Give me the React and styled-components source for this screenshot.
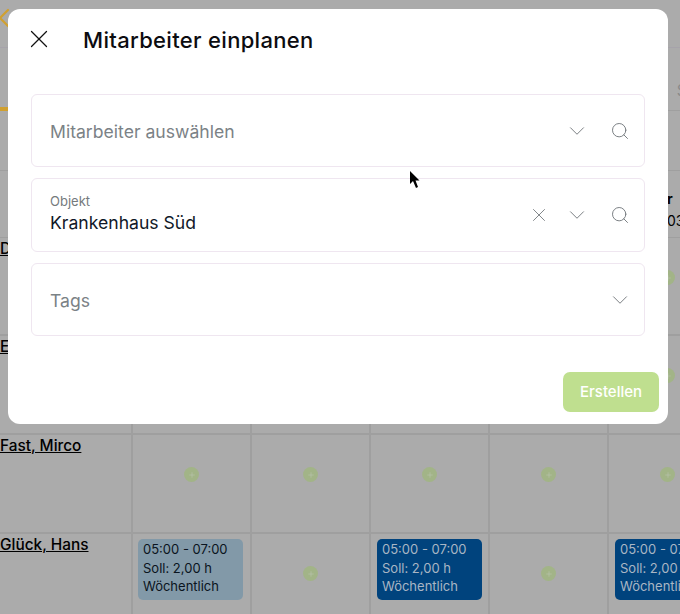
import styled, { createGlobalStyle } from 'styled-components';
import { X, ChevronDown, ChevronLeft, Search, Plus } from 'lucide-react';

const GlobalStyle = createGlobalStyle`
    * { box-sizing: border-box; }
    html, body { margin: 0; height: 100%; }
    body {
        background: #ababab;
        font-family: Inter, "Liberation Sans", sans-serif;
        overflow: hidden;
    }
`

const shifts = { 1: 'light', 3: 'dark', 5: 'dark' };
const rows = [
    { name: 'Dietrich, Ute', height: 98 },
    { name: 'Ernst, Paul', height: 99 },
    { name: 'Fast, Mirco', height: 99 },
    { name: 'Glück, Hans', height: 99, shifts },
];

const Field = ({ label, value, placeholder, clear }) => (
    <FieldBox $tall={Boolean(label)}>
        <FieldText>
            {label && <FieldLabel>{label}</FieldLabel>}
            {value ? <FieldValue>{value}</FieldValue> : <Placeholder>{placeholder}</Placeholder>}
        </FieldText>
        <FieldIcons>
            {clear && <ClearSlot><X size={22} strokeWidth={0.95} /></ClearSlot>}
            <IconSlot><ChevronDown size={26} strokeWidth={0.85} /></IconSlot>
            <IconSlot><Search size={20} strokeWidth={1.1} /></IconSlot>
        </FieldIcons>
    </FieldBox>
);

export default function App() {
    return (
        <Page>
            <GlobalStyle />
            <Schedule>
                <TopBar><BackIcon size={32} strokeWidth={1.7} /></TopBar>
                <Tabs><TabMark /><TabText>S</TabText></Tabs>
                <Filler />
                <HeadRow>
                    <WeekDay>Fr</WeekDay>
                    <WeekDate>03</WeekDate>
                </HeadRow>
                {rows.map((row) => (
                    <Row key={row.name} $height={row.height}>
                        <NameCell><NameLink>{row.name}</NameLink></NameCell>
                        {[1, 2, 3, 4, 5].map((day) => (
                            <DayCell key={day} $hasShift={row.shifts && row.shifts[day]}>
                                {row.shifts && row.shifts[day] ? (
                                    <Shift $tone={row.shifts[day]}>
                                        <span>05:00 - 07:00</span>
                                        <span>Soll: 2,00 h</span>
                                        <span>Wöchentlich</span>
                                    </Shift>
                                ) : (
                                    <AddDot><Plus size={8} strokeWidth={2} /></AddDot>
                                )}
                            </DayCell>
                        ))}
                    </Row>
                ))}
            </Schedule>

            <Modal>
                <ModalHead>
                    <CloseButton><X size={30} strokeWidth={1} /></CloseButton>
                    <Title>Mitarbeiter einplanen</Title>
                </ModalHead>
                <Fields>
                    <Field placeholder="Mitarbeiter auswählen" />
                    <Field label="Objekt" value="Krankenhaus Süd" clear />
                    <TagsField>
                        <Placeholder>Tags</Placeholder>
                        <IconSlot><ChevronDown size={26} strokeWidth={0.85} /></IconSlot>
                    </TagsField>
                </Fields>
                <Actions><SubmitButton>Erstellen</SubmitButton></Actions>
            </Modal>

            <Cursor width="12" height="18" viewBox="0 0 12 18">
                <path d="M1 0 L1 13 L4 10 L7 17 L9 16 L6.5 9.5 L10.5 9.5 Z" fill="#000" />
            </Cursor>
        </Page>
    );
}

const Page = styled.div`
    position: relative;
    width: 680px;
    height: 614px;
    overflow: hidden;
    background: #ababab;
`
const Schedule = styled.div`
    display: flex;
    flex-direction: column;
    width: 720px;
    color: #000;
`
const TopBar = styled.div`
    height: 48px;
    padding-top: 2px;
    border-bottom: 1px solid #a6a3aa;
`
const BackIcon = styled(ChevronLeft)`
    display: block;
    margin-left: -12px;
    color: #d0a030;
`
const Tabs = styled.div`
    display: flex;
    justify-content: space-between;
    width: 680px;
    height: 63px;
    border-bottom: 1px solid #9f9f9f;
`
const TabMark = styled.div`
    align-self: flex-end;
    width: 10px;
    height: 4px;
    margin-bottom: -1px;
    background: #d0a030;
`
const TabText = styled.span`
    margin: 32px -7px 0 0;
    font-size: 16px;
    color: #8a8a8a;
`
const Filler = styled.div`
    height: 60px;
    border-bottom: 1px solid #9f9f9f;
`
const HeadRow = styled.div`
    display: flex;
    flex-direction: column;
    height: 67px;
    padding: 17px 0 0 659px;
    border-bottom: 1px solid #9f9f9f;
    font-size: 14px;
    line-height: 22px;
`
const WeekDay = styled.strong`
    font-weight: 700;
`
const WeekDate = styled.span`
    margin-left: 8px;
`
const Row = styled.div`
    display: grid;
    grid-template-columns: 133px repeat(5, 119px);
    height: ${(p) => p.$height}px;
    border-bottom: 2px solid #9f9f9f;
`
const NameCell = styled.div`
    padding-top: 2px;
    border-right: 2px solid #9f9f9f;
    font-size: 15.4px;
    font-weight: 500;
    line-height: 18px;
`
const NameLink = styled.a`
    color: #000;
    text-decoration: underline;
    white-space: nowrap;
`
const DayCell = styled.div`
    display: flex;
    justify-content: ${(p) => (p.$hasShift ? 'flex-start' : 'center')};
    align-items: flex-start;
    border-right: 2px solid #9f9f9f;
    padding: ${(p) => (p.$hasShift ? '5px 0 0 6px' : '32px 0 0')};
`
const AddDot = styled.div`
    display: flex;
    align-items: center;
    justify-content: center;
    width: 15px;
    height: 15px;
    border-radius: 50%;
    background: #a2b487;
    color: #b9c2ac;
`
const Shift = styled.div`
    flex: none;
    display: flex;
    flex-direction: column;
    width: 105px;
    height: 61px;
    margin-left: ${(p) => (p.$tone === 'dark' ? '0' : '-1px')};
    padding: 1px 0 0 5px;
    border-radius: 5px;
    font-size: 13px;
    line-height: 18.5px;
    white-space: nowrap;
    overflow: hidden;
    background: ${(p) => (p.$tone === 'dark' ? '#00437d' : '#8299a8')};
    color: ${(p) => (p.$tone === 'dark' ? '#a9b6c4' : '#0a1420')};
`
const Modal = styled.div`
    position: absolute;
    top: 9px;
    left: 8px;
    width: 660px;
    height: 415px;
    padding: 0 9px 12px 23px;
    display: flex;
    flex-direction: column;
    background: #fff;
    border-radius: 12px;
`
const ModalHead = styled.div`
    display: flex;
    align-items: center;
    height: 62px;
    margin-bottom: 23px;
`
const CloseButton = styled.div`
    display: flex;
    width: 60px;
    margin: -2px 0 0 -7px;
    color: #111;
`
const Title = styled.h1`
    margin: 0 0 0 -1px;
    font-size: 22px;
    font-weight: 450;
    letter-spacing: 0.32px;
    color: #0c0c10;
`
const Fields = styled.div`
    display: flex;
    flex-direction: column;
    gap: 11px;
    width: 614px;
`
const FieldBox = styled.div`
    display: flex;
    align-items: center;
    justify-content: space-between;
    height: ${(p) => (p.$tall ? '74px' : '73px')};
    padding: 0 14px 0 18px;
    border: 1px solid #efe6f0;
    border-radius: 6px;
`
const TagsField = styled(FieldBox)`
    padding-right: 11px;
`
const FieldText = styled.div`
    display: flex;
    flex-direction: column;
`
const FieldLabel = styled.span`
    margin-bottom: 2px;
    font-size: 13px;
    line-height: 16px;
    color: #757a7d;
`
const FieldValue = styled.span`
    margin-bottom: 2px;
    font-size: 17.6px;
    line-height: 24px;
    color: #101828;
`
const Placeholder = styled.span`
    padding-top: 2px;
    font-size: 17.6px;
    color: #7b8286;
`
const FieldIcons = styled.div`
    display: flex;
    align-items: center;
    gap: 20px;
`
const IconSlot = styled.span`
    display: flex;
    color: #6f7478;
`
const ClearSlot = styled(IconSlot)`
    margin-right: -6px;
`
const Actions = styled.div`
    display: flex;
    justify-content: flex-end;
    margin-top: auto;
`
const SubmitButton = styled.button`
    width: 96px;
    height: 40px;
    padding: 0 0 2px;
    border: 0;
    border-radius: 7px;
    background: #bfdf8f;
    color: #fff;
    font-family: inherit;
    font-size: 15px;
    font-weight: 500;
`
const Cursor = styled.svg`
    position: absolute;
    left: 409px;
    top: 171px;
`
